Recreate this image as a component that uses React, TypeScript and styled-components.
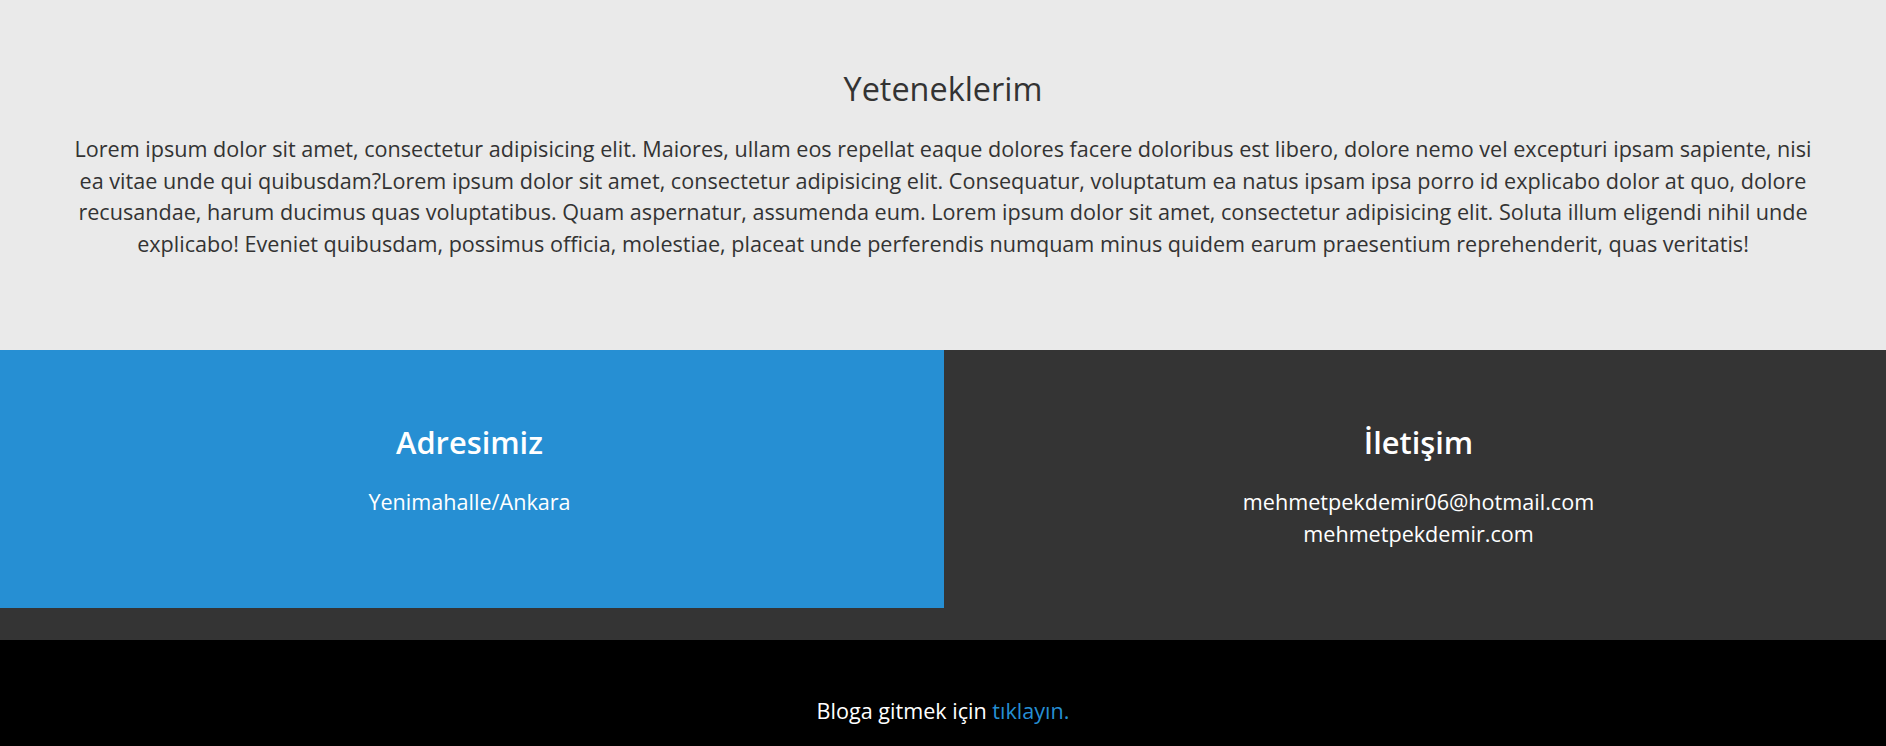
import styled, { createGlobalStyle } from "styled-components";

const Colors = {
  light: "#eaeaea",
  text: "#333333",
  blue: "#268fd3",
  dark: "#343434",
  black: "#000000",
  white: "#ffffff",
};

const GlobalStyle = createGlobalStyle`
  html, body {
    margin: 0;
    padding: 0;
  }

  body {
    font-family: "Open Sans", "Noto Sans", sans-serif;
    background-color: ${Colors.black};
    -webkit-font-smoothing: antialiased;
  }

  * {
    box-sizing: border-box;
  }
`;

const contacts = [
  { title: "Adresimiz", lines: ["Yenimahalle/Ankara"], accent: true },
  {
    title: "İletişim",
    lines: ["mehmetpekdemir06@hotmail.com", "mehmetpekdemir.com"],
    accent: false,
  },
];

function App() {
  return (
    <>
      <GlobalStyle />
      <Skills>
        <SectionTitle>Yeteneklerim</SectionTitle>
        <SkillsText>
          Lorem ipsum dolor sit amet, consectetur adipisicing elit. Maiores,
          ullam eos repellat eaque dolores facere doloribus est libero, dolore
          nemo vel excepturi ipsam sapiente, nisi ea vitae unde qui
          quibusdam?Lorem ipsum dolor sit amet, consectetur adipisicing elit.
          Consequatur, voluptatum ea natus ipsam ipsa porro id explicabo dolor
          at quo, dolore recusandae, harum ducimus quas voluptatibus. Quam
          aspernatur, assumenda eum. Lorem ipsum dolor sit amet, consectetur
          adipisicing elit. Soluta illum eligendi nihil unde explicabo! Eveniet
          quibusdam, possimus officia, molestiae, placeat unde perferendis
          numquam minus quidem earum praesentium reprehenderit, quas veritatis!
        </SkillsText>
      </Skills>

      <ContactRow>
        {contacts.map((item) => (
          <ContactBox key={item.title} $accent={item.accent}>
            <ContactTitle>{item.title}</ContactTitle>
            <ContactText>
              {item.lines.map((line) => (
                <span key={line}>{line}</span>
              ))}
            </ContactText>
          </ContactBox>
        ))}
      </ContactRow>

      <Footer>
        <FooterText>
          Bloga gitmek için <a href="#blog">tıklayın.</a>
        </FooterText>
      </Footer>
    </>
  );
}

export default App;

const Skills = styled.section`
  background-color: ${Colors.light};
  padding: 68px 0 90px;
  text-align: center;
  height: 350px;
`;

const SectionTitle = styled.h2`
  margin: 0;
  font-size: 32.4px;
  font-weight: 400;
  line-height: 40px;
  color: ${Colors.text};
`;

const SkillsText = styled.p`
  width: 1750px;
  margin: 25px auto 0;
  font-size: 21.6px;
  line-height: 31.7px;
  color: ${Colors.text};
`;

const ContactRow = styled.section`
  display: grid;
  grid-template-columns: 944px 1fr;
  background-color: ${Colors.dark};
  padding-bottom: 32px;
`;

const ContactBox = styled.div<{ $accent: boolean }>`
  display: flex;
  flex-direction: column;
  align-items: center;
  gap: 24px;
  padding: ${({ $accent }) => ($accent ? "72px 25px 59px 20px" : "72px 20px 59px 27px")};
  background-color: ${({ $accent }) => ($accent ? Colors.blue : Colors.dark)};
  color: ${Colors.white};
  text-align: center;
`;

const ContactTitle = styled.h2`
  margin: 0;
  font-size: 30.8px;
  font-weight: 600;
  line-height: 40px;
`;

const ContactText = styled.p`
  display: flex;
  flex-direction: column;
  margin: 0;
  font-size: 21.6px;
  line-height: 31.7px;
`;

const Footer = styled.footer`
  background-color: ${Colors.black};
  padding: 55px 0 50px;
  text-align: center;
`;

const FooterText = styled.p`
  margin: 0;
  font-size: 21.6px;
  line-height: 32px;
  color: ${Colors.white};

  & a {
    color: ${Colors.blue};
    text-decoration: none;
  }
`;
